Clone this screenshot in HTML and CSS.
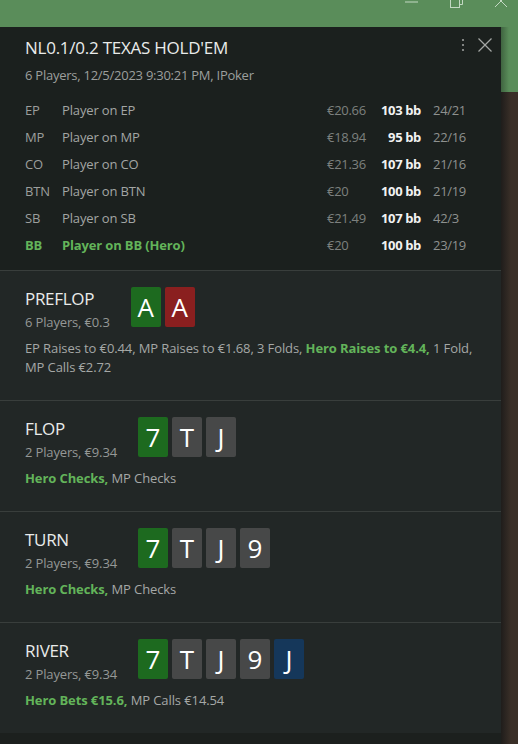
FILE: index.html
```html
<!DOCTYPE html>
<html>
<head>
<meta charset="utf-8">
<link rel="stylesheet" href="styles.css">
</head>
<body>
<div class="titlebar">
  <svg class="wc" width="16" height="10" viewBox="0 0 16 10"><line x1="1" y1="2" x2="14" y2="2"/></svg>
  <svg class="wc" width="16" height="10" viewBox="0 0 16 10"><rect x="1.5" y="-4" width="9" height="11.5"/><polyline points="4,-4 4,-6 13.5,-6 13.5,4.5 10.5,4.5"/></svg>
  <svg class="wc" width="16" height="10" viewBox="0 0 16 10"><line x1="1" y1="-5" x2="13" y2="7"/><line x1="13" y1="-5" x2="1" y2="7"/></svg>
</div>
<div class="main">
  <div class="panel">
    <header class="head">
      <div class="head-top">
        <h1 class="title">NL0.1/0.2 TEXAS HOLD'EM</h1>
        <div class="tools">
          <svg width="6" height="16" viewBox="0 0 6 16" class="kebab"><circle cx="3" cy="3" r="1.1"/><circle cx="3" cy="8" r="1.1"/><circle cx="3" cy="13" r="1.1"/></svg>
          <svg width="16" height="16" viewBox="0 0 16 16" class="close"><line x1="1.5" y1="1.5" x2="14.5" y2="14.5"/><line x1="14.5" y1="1.5" x2="1.5" y2="14.5"/></svg>
        </div>
      </div>
      <div class="sub">6 Players, 12/5/2023 9:30:21 PM, IPoker</div>
      <div class="players">
        <span class="pos">EP</span><span class="name">Player on EP</span><span class="amt">€20.66</span><span class="bb">103 bb</span><span class="st">24/21</span>
        <span class="pos">MP</span><span class="name">Player on MP</span><span class="amt">€18.94</span><span class="bb">95 bb</span><span class="st">22/16</span>
        <span class="pos">CO</span><span class="name">Player on CO</span><span class="amt">€21.36</span><span class="bb">107 bb</span><span class="st">21/16</span>
        <span class="pos">BTN</span><span class="name">Player on BTN</span><span class="amt">€20</span><span class="bb">100 bb</span><span class="st">21/19</span>
        <span class="pos">SB</span><span class="name">Player on SB</span><span class="amt">€21.49</span><span class="bb">107 bb</span><span class="st">42/3</span>
        <span class="pos hero">BB</span><span class="name hero">Player on BB (Hero)</span><span class="amt">€20</span><span class="bb">100 bb</span><span class="st">23/19</span>
      </div>
    </header>

    <section class="street">
      <div class="street-top">
        <div class="label">
          <div class="s-title">PREFLOP</div>
          <div class="s-sub">6 Players, €0.3</div>
        </div>
        <div class="cards"><span class="card green">A</span><span class="card red">A</span></div>
      </div>
      <p class="actions">EP Raises to €0.44, MP Raises to €1.68, 3 Folds, <b class="hero">Hero Raises to €4.4,</b> 1 Fold, MP Calls €2.72</p>
    </section>

    <section class="street">
      <div class="street-top">
        <div class="label">
          <div class="s-title">FLOP</div>
          <div class="s-sub">2 Players, €9.34</div>
        </div>
        <div class="cards"><span class="card green">7</span><span class="card grey">T</span><span class="card grey">J</span></div>
      </div>
      <p class="actions"><b class="hero">Hero Checks,</b> MP Checks</p>
    </section>

    <section class="street">
      <div class="street-top">
        <div class="label">
          <div class="s-title">TURN</div>
          <div class="s-sub">2 Players, €9.34</div>
        </div>
        <div class="cards"><span class="card green">7</span><span class="card grey">T</span><span class="card grey">J</span><span class="card grey">9</span></div>
      </div>
      <p class="actions"><b class="hero">Hero Checks,</b> MP Checks</p>
    </section>

    <section class="street">
      <div class="street-top">
        <div class="label">
          <div class="s-title">RIVER</div>
          <div class="s-sub">2 Players, €9.34</div>
        </div>
        <div class="cards"><span class="card green">7</span><span class="card grey">T</span><span class="card grey">J</span><span class="card grey">9</span><span class="card blue">J</span></div>
      </div>
      <p class="actions"><b class="hero">Hero Bets €15.6,</b> MP Calls €14.54</p>
    </section>
    <div class="foot"></div>
  </div>
  <div class="side">
    <div class="side-green"></div>
    <div class="side-brown"></div>
  </div>
</div>
</body>
</html>
```
FILE: styles.css
```css
* { box-sizing: border-box; }
html, body { margin: 0; padding: 0; }
body {
  width: 518px;
  height: 744px;
  overflow: hidden;
  background: #5a8d5a;
  font-family: "Open Sans", "Noto Sans", sans-serif;
  display: flex;
  flex-direction: column;
}
.titlebar {
  height: 27px;
  display: flex;
  justify-content: flex-end;
  align-items: flex-start;
  gap: 29px;
  padding-right: 8px;
  flex: none;
}
.wc { fill: none; stroke: #d6e6d6; stroke-width: 1; opacity: .85; }
.main { flex: 1; display: flex; min-height: 0; }
.panel {
  width: 501px;
  flex: none;
  display: flex;
  flex-direction: column;
  background: #222726;
}
.side { flex: 1; display: flex; flex-direction: column; }
.side-green { height: 65px; background: linear-gradient(90deg, #3f6440 0, #5a8d5a 8px); }
.side-brown { flex: 1; background: linear-gradient(90deg, #1f1d1b 0, #3a2f28 10px); }

.head {
  background: #1b201e;
  padding: 9px 8px 10px 25px;
  height: 243px;
  flex: none;
}
.head-top { display: flex; justify-content: space-between; align-items: flex-start; }
.title {
  margin: 0;
  font-weight: 400;
  font-size: 17px;
  line-height: 24px;
  letter-spacing: -0.25px;
  color: #e9ebea;
}
.tools { display: flex; align-items: center; gap: 11px; margin-top: 1px; }
.kebab { fill: #9a9d9b; }
.close { stroke: #a3a6a4; stroke-width: 1.3; }
.sub {
  margin-top: 6px;
  font-size: 13px;
  line-height: 18px;
  letter-spacing: -0.25px;
  color: #9c9f9d;
}
.players {
  margin-top: 13px;
  display: grid;
  grid-template-columns: 37px 265px 52px 42px auto;
  font-size: 13px;
  line-height: 27px;
  letter-spacing: -0.15px;
}
.pos { color: #9c9f9d; }
.name { color: #a3a6a4; }
.amt { color: #7d807e; letter-spacing: -0.3px; }
.bb { color: #f2f2f2; font-weight: 700; text-align: right; white-space: nowrap; letter-spacing: -0.35px; }
.st { color: #8e918f; padding-left: 12px; letter-spacing: -0.3px; }
.hero { color: #63b45a; font-weight: 700; }

.street {
  border-top: 1px solid #393e3c;
  padding: 16px 25px 23px;
  flex: none;
}
.street-top { display: flex; align-items: flex-start; gap: 21px; }
.s-title { font-size: 17px; line-height: 24px; letter-spacing: -0.3px; color: #e9ebea; }
.s-sub { font-size: 13px; line-height: 22px; letter-spacing: -0.15px; color: #959896; }
.cards { display: flex; gap: 4px; }
.card {
  width: 30px;
  height: 40px;
  border-radius: 2px;
  color: #fff;
  font-size: 26px;
  line-height: 40px;
  text-align: center;
}
.green { background: #1d6a1f; }
.red { background: #8a1f1f; }
.grey { background: #474848; }
.blue { background: #15375a; }
.actions {
  margin: 6px 0 0;
  font-size: 13px;
  line-height: 19px;
  letter-spacing: -0.1px;
  color: #a5a8a6;
}
.actions b { font-weight: 700; }
.foot { flex: 1; background: #1c201e; }
```
